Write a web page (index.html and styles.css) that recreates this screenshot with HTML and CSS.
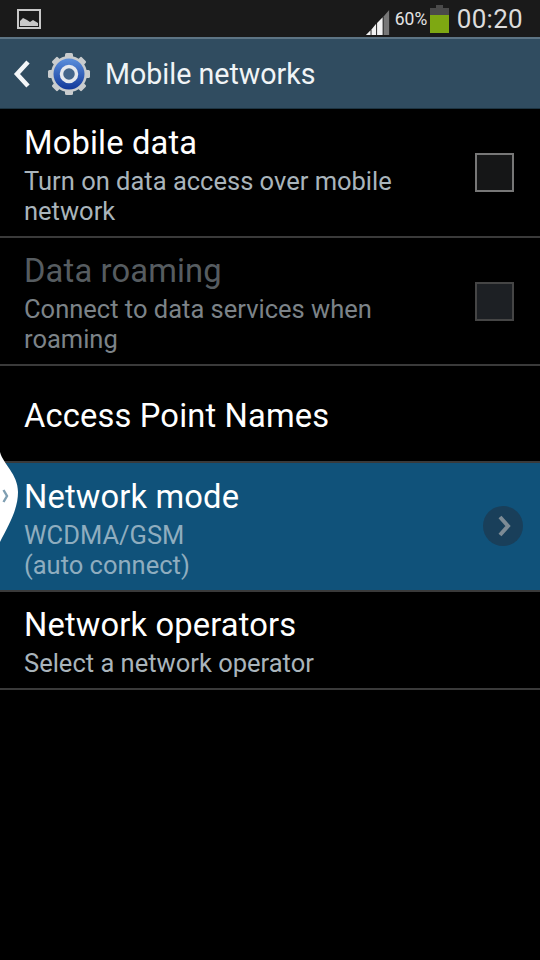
FILE: index.html
```html
<!DOCTYPE html>
<html lang="en">
<head>
<meta charset="utf-8">
<title>Mobile networks</title>
<link rel="stylesheet" href="styles.css">
</head>
<body>
<div class="status">
  <svg class="pic" viewBox="0 0 24 20" width="24" height="20"><rect x="1" y="1" width="22" height="18" fill="none" stroke="#c8c8c8" stroke-width="2"/><path d="M3 17v-5l3-3 4 2 3 2 3-2 5 3v3z" fill="#c8c8c8"/></svg>
  <div class="status-right">
    <svg class="signal" viewBox="0 0 26 28" width="26" height="26"><path d="M0 28l5-5v5z" fill="#f2f2f2"/><path d="M6 22l5-6v12H6z" fill="#f2f2f2"/><path d="M12 15l6-6v19h-6z" fill="#f2f2f2"/><path d="M19 8l6-7v27h-6z" fill="#777"/></svg>
    <span class="pct">60%</span>
    <svg class="batt" viewBox="0 0 19 28" width="19" height="28"><path d="M6 0h7v3h6v7H0V3h6z" fill="#4a4a4a"/><rect y="10" width="19" height="18" fill="#7ea812"/></svg>
    <span class="clock">00:20</span>
  </div>
</div>
<header class="bar">
  <svg class="back" viewBox="0 0 18 30" width="18" height="30"><path d="M15 3L4 15l11 12" fill="none" stroke="#f4f6f8" stroke-width="4.5"/></svg>
  <svg class="gear" viewBox="0 0 44 44" width="44" height="44">
    <defs><linearGradient id="g" x1="0" y1="0" x2="0" y2="1"><stop offset="0" stop-color="#5b8fdc"/><stop offset="1" stop-color="#12389a"/></linearGradient></defs>
    <g fill="#c9ccce"><circle cx="22" cy="22" r="18"/>
    <rect x="18" y="1" width="8" height="42" rx="1.5"/>
    <rect x="18" y="1" width="8" height="42" rx="1.5" transform="rotate(45 22 22)"/>
    <rect x="18" y="1" width="8" height="42" rx="1.5" transform="rotate(90 22 22)"/>
    <rect x="18" y="1" width="8" height="42" rx="1.5" transform="rotate(135 22 22)"/></g>
    <circle cx="22" cy="22" r="15.5" fill="url(#g)"/>
    <circle cx="22" cy="22" r="7.5" fill="#43658a" stroke="#e4e8ee" stroke-width="3.5"/>
  </svg>
  <h1 class="bar-title">Mobile networks</h1>
</header>
<main class="list">
  <div class="row row-first">
    <div class="text"><div class="title">Mobile data</div><div class="sub">Turn on data access over mobile<br>network</div></div>
    <span class="check"></span>
  </div>
  <div class="row row-second off">
    <div class="text"><div class="title">Data roaming</div><div class="sub">Connect to data services when<br>roaming</div></div>
    <span class="check"></span>
  </div>
  <div class="row row-plain">
    <div class="text"><div class="title">Access Point Names</div></div>
  </div>
  <div class="row row-sel selected">
    <div class="text"><div class="title">Network mode</div><div class="sub">WCDMA/GSM<br>(auto connect)</div></div>
    <span class="go"><svg viewBox="0 0 14 24" width="14" height="24"><path d="M3 3l8 9-8 9" fill="none" stroke="#7d8b95" stroke-width="4"/></svg></span>
    <span class="handle"><svg viewBox="0 0 20 92" width="20" height="92"><path d="M0 0C3 12 18 22 18 40C18 58 8 74 0 90z" fill="#fff"/><path d="M3.500 38l3.500 6-3.500 6" fill="none" stroke="#7f9fb2" stroke-width="2.400"/></svg></span>
  </div>
  <div class="row row-mid">
    <div class="text"><div class="title">Network operators</div><div class="sub">Select a network operator</div></div>
  </div>
</main>
</body>
</html>
```
FILE: styles.css
```css
* { box-sizing: border-box; margin: 0; padding: 0; }
html, body { background: #000; }
body { width: 540px; height: 960px; overflow: hidden; font-family: Roboto, "Noto Sans", sans-serif; color: #fff; }
.status { height: 39px; background: #1a1a1a; border-bottom: 2px solid #5d7484; display: flex; align-items: center; justify-content: space-between; padding: 0 17px 0 17px; }
.pic { display: block; }
.status-right { display: flex; align-items: center; }
.signal { display: block; margin-top: 6px; }
.pct { font-size: 17.500px; color: #e4e4e4; margin-left: 4px; width: 32px; }
.batt { display: block; margin-left: 3px; margin-top: 1px; }
.clock { font-size: 26px; color: #dcdcdc; margin-left: 8px; letter-spacing: .3px; }
.bar { height: 70px; background: #304c60; border-bottom: 1px solid #1d3442; display: flex; align-items: center; padding-left: 13px; }
.back { display: block; }
.gear { display: block; margin-left: 16px; }
.bar-title { font-size: 28.600px; font-weight: 400; color: #f0f4f6; margin-left: 14px; }
.list { display: flex; flex-direction: column; }
.row { position: relative; display: flex; align-items: center; padding-left: 24px; border-bottom: 2px solid #3a3a3a; }
.row-first { height: 129px; align-items: flex-start; padding-top: 14px; }
.row-second { height: 128px; align-items: flex-start; padding-top: 13px; }
.row-plain { height: 97px; padding-top: 4px; }
.row-sel { height: 129px; align-items: flex-start; padding-top: 14px; }
.row-mid { height: 98px; align-items: flex-start; padding-top: 13px; }
.text { flex: 1; }
.title { font-size: 32.700px; line-height: 40px; letter-spacing: .15px; }
.sub { font-size: 25.500px; line-height: 30px; color: #a9b4bb; margin-top: 3px; }
.off .title { color: #565c60; }
.off .sub { color: #7c8388; }
.check { width: 39px; height: 39px; margin: 30px 26px 0 0; background: #151617; border: 2px solid #777; }
.off .check { background: #1d2024; border-color: #454545; margin-top: 31px; }
.selected { background: #10527a; }
.selected .sub { color: #8fadbf; }
.go { width: 40px; height: 40px; margin: 29px 17px 0 0; border-radius: 50%; background: #193f5a; display: flex; align-items: center; justify-content: center; padding-left: 1px; }
.handle { position: absolute; left: 0; top: -11px; }
.handle svg { display: block; }
```
